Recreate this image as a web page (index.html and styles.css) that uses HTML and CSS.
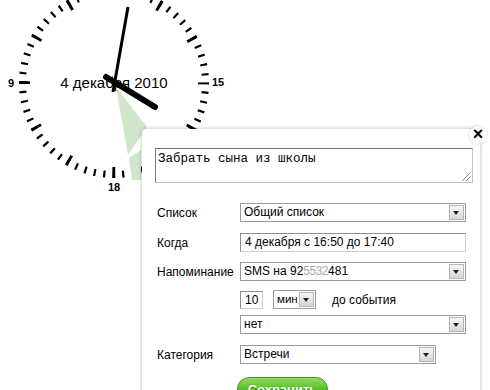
FILE: index.html
```html
<!DOCTYPE html>
<html>
<head>
    <title>Напоминание</title>
    <link rel="stylesheet" href="styles.css">
</head>
<body>
    <div class="stage">
        <svg class="clock" width="240" height="200" viewBox="0 0 240 200">
            <circle class="ticks-minor" cx="114" cy="83" r="91.5"/>
            <circle class="ticks-major" cx="114" cy="83" r="89.5"/>
            <text class="hour" x="11" y="87">9</text>
            <text class="hour" x="218" y="86">15</text>
            <text class="hour" x="114" y="191">18</text>
            <text class="date" x="114" y="88">4 декабря 2010</text>
            <polygon class="pointer" points="116,87 147,127 128,155"/>
            <polygon class="pointer" points="129,158 141,150 141,180 132,180"/>
            <line class="hand-min" x1="113" y1="92" x2="128" y2="7"/>
            <line class="hand-hour" x1="106" y1="77" x2="155" y2="107"/>
        </svg>

        <div class="popup">
            <span class="close">×</span>
            <div class="note">Забрать сына из школы<span class="grip"></span></div>

            <div class="form">
                <div class="row row-list">
                    <label>Список</label>
                    <div class="select"><span>Общий список</span><i class="arrow"></i></div>
                </div>
                <div class="row row-when">
                    <label>Когда</label>
                    <div class="field">4 декабря с 16:50 до 17:40</div>
                </div>
                <div class="row row-remind">
                    <label>Напоминание</label>
                    <div class="select"><span>SMS на 92<span class="masked">5532</span>481</span><i class="arrow"></i></div>
                </div>
                <div class="row row-before">
                    <label></label>
                    <div class="field small">10</div>
                    <div class="select unit"><span>мин</span><i class="arrow"></i></div>
                    <span class="hint">до события</span>
                </div>
                <div class="row row-second">
                    <label></label>
                    <div class="select"><span>нет</span><i class="arrow"></i></div>
                </div>
                <div class="row row-cat">
                    <label>Категория</label>
                    <div class="select narrow"><span>Встречи</span><i class="arrow"></i></div>
                </div>
            </div>

            <button type="button" class="save">Сохранить</button>
        </div>
    </div>
</body>
</html>
```

FILE: styles.css
```css
html, body {
    margin: 0;
    overflow: hidden;
    background: #fff;
}
body {
    font-family: "Liberation Sans", Arial, sans-serif;
    font-size: 12px;
    color: #000;
}
.stage {
    position: relative;
    width: 490px;
    height: 390px;
}
.clock {
    display: block;
}
.ticks-minor {
    fill: none;
    stroke: #000;
    stroke-width: 7;
    stroke-dasharray: 2.2 7.382;
    stroke-dashoffset: 1.1;
}
.ticks-major {
    fill: none;
    stroke: #000;
    stroke-width: 11;
    stroke-dasharray: 3 43.862;
    stroke-dashoffset: 1.5;
}
.hour {
    font-family: "Liberation Sans", Arial, sans-serif;
    font-weight: bold;
    font-size: 11px;
    text-anchor: middle;
}
.date {
    font-family: "Liberation Sans", Arial, sans-serif;
    font-size: 15px;
    text-anchor: middle;
}
.pointer {
    fill: #cfe6cb;
}
.hand-min {
    stroke: #000;
    stroke-width: 3;
}
.hand-hour {
    stroke: #000;
    stroke-width: 6;
    stroke-linecap: round;
}

/* popup */
.popup {
    position: absolute;
    left: 142px;
    top: 129px;
    width: 338px;
    height: 290px;
    box-sizing: border-box;
    padding: 19px 0 0 13px;
    background: #fff;
    border-radius: 4px;
    box-shadow: 0 0 4px rgba(0,0,0,0.28);
}
.close {
    position: absolute;
    left: 327px;
    top: -3px;
    width: 18px;
    height: 18px;
    border-radius: 50%;
    background: #fff;
    box-shadow: 0 0 3px rgba(0,0,0,0.2);
    font-weight: bold;
    font-size: 18px;
    line-height: 17px;
    text-align: center;
}
.note {
    position: relative;
    width: 318px;
    height: 35px;
    box-sizing: border-box;
    border: 1px solid #7a7a7a;
    border-right-color: #c4c4c4;
    border-bottom-color: #c4c4c4;
    padding: 3px 2px;
    font-family: "Liberation Mono", "Courier New", monospace;
    font-size: 12.5px;
}
.grip {
    position: absolute;
    right: 1px;
    bottom: 1px;
    width: 9px;
    height: 9px;
    background: linear-gradient(135deg, transparent 45%, #999 45%, #999 52%, transparent 52%, transparent 70%, #999 70%, #999 77%, transparent 77%);
}

.form {
    display: flex;
    flex-direction: column;
    margin-top: 20px;
    padding-left: 2px;
}
.row {
    display: flex;
    align-items: center;
    height: 19px;
}
.row label {
    width: 83px;
    flex: none;
}
.row-when { margin-top: 11px; }
.row-remind { margin-top: 10px; }
.row-before { margin-top: 9px; }
.row-second { margin-top: 6px; }
.row-cat { margin-top: 11px; }

.select, .field {
    position: relative;
    width: 226px;
    height: 19px;
    box-sizing: border-box;
    border: 1px solid #9b9b9b;
    padding: 0 0 0 3px;
    font-size: 12px;
    line-height: 17px;
    background: #fff;
}
.field {
    border-color: #8e8e8e #cfcfcf #cfcfcf #8e8e8e;
    padding-left: 4px;
}
.field.small {
    width: 23px;
    height: 18px;
}
.select.unit {
    width: 43px;
    margin-left: 10px;
    padding-left: 3px;
    font-size: 11.5px;
}
.select.narrow {
    width: 196px;
}
.masked {
    color: #aaa;
    letter-spacing: -0.5px;
}
.arrow {
    position: absolute;
    right: 1px;
    top: 1px;
    width: 15px;
    height: 15px;
    box-sizing: border-box;
    border: 1px solid #b5b5b5;
    background: linear-gradient(#f6f6f6, #d6d6d6);
}
.arrow::after {
    content: "";
    position: absolute;
    left: 3px;
    top: 5px;
    border-left: 3.5px solid transparent;
    border-right: 3.5px solid transparent;
    border-top: 4px solid #222;
}
.hint {
    margin-left: 16px;
}

.save {
    margin: 13px 0 0 82px;
    width: 91px;
    height: 24px;
    border: 1px solid #3c9a1d;
    border-radius: 12px;
    background: linear-gradient(#8fdc5c, #55bb2a 55%, #3ea81c);
    color: #fff;
    font-family: "Liberation Sans", Arial, sans-serif;
    font-weight: bold;
    font-size: 13px;
    text-shadow: 0 1px 1px #2b7a12;
    padding: 0;
}
```
